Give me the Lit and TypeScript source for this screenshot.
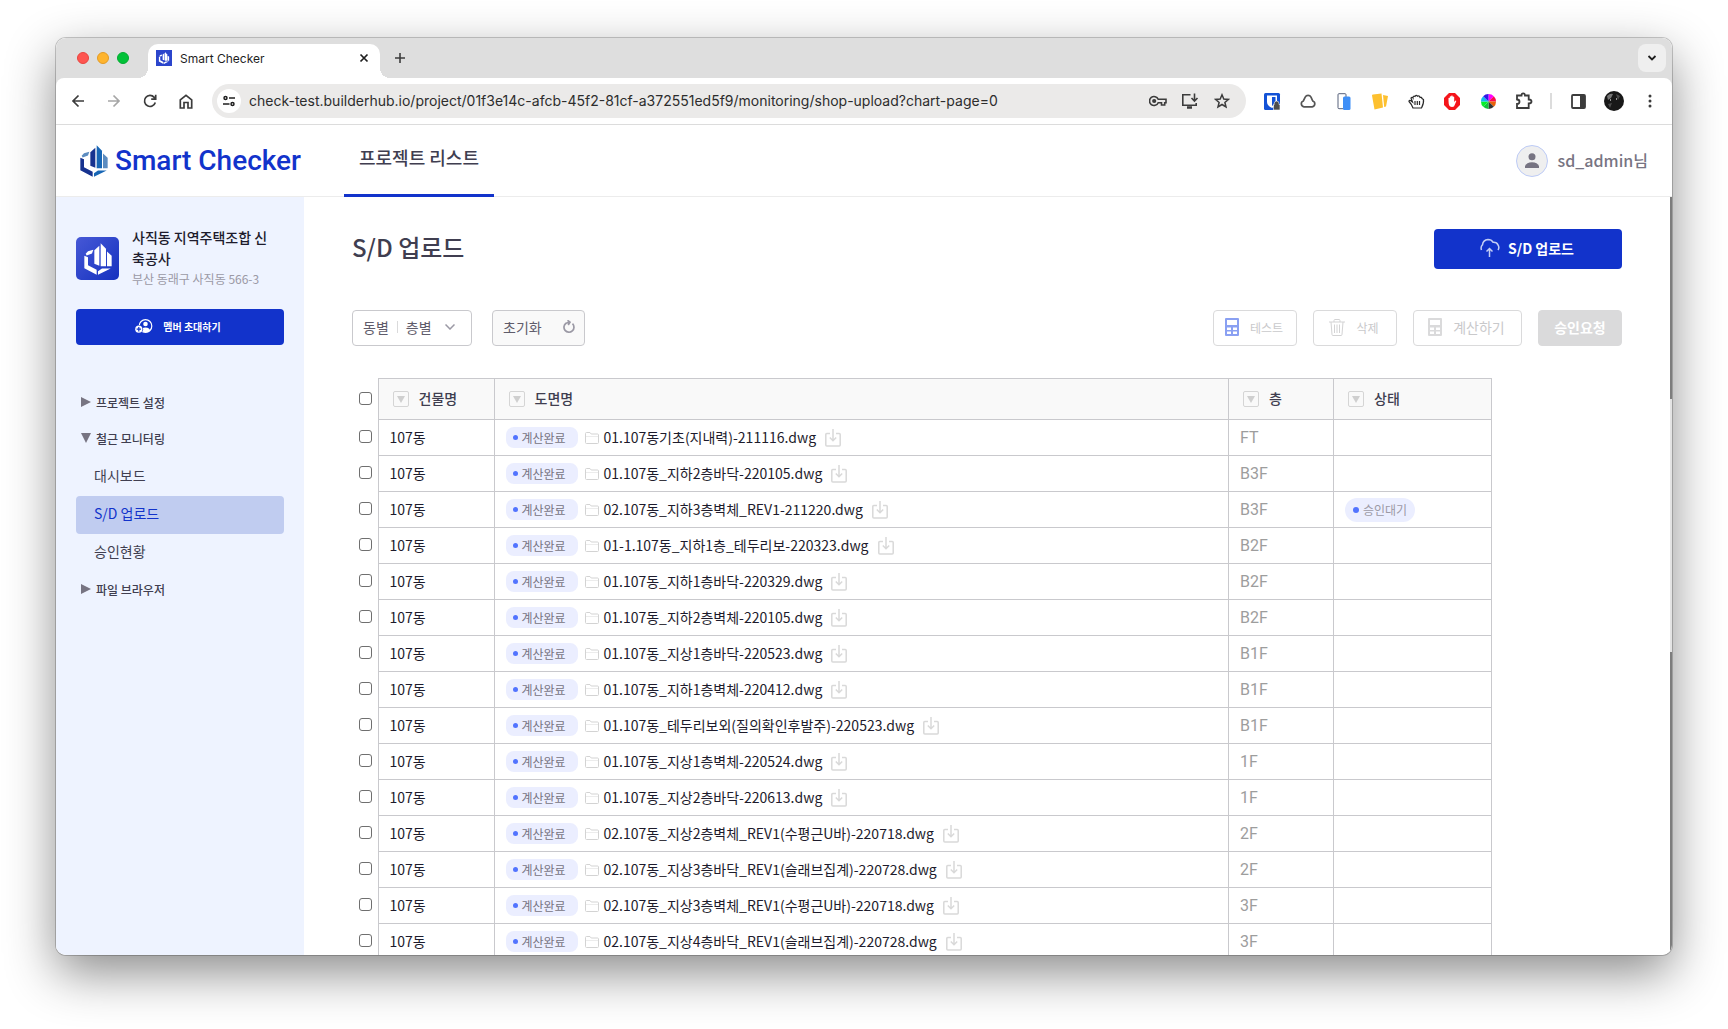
import { LitElement, html, css, svg, nothing } from "lit";
import { customElement, property } from "lit/decorators.js";

interface Drawing {
  name: string;
  floor: string;
  status?: string;
}

const BUILDING = "107동";
const DRAWINGS: Drawing[] = [
  { name: "01.107동기초(지내력)-211116.dwg", floor: "FT" },
  { name: "01.107동_지하2층바닥-220105.dwg", floor: "B3F" },
  { name: "02.107동_지하3층벽체_REV1-211220.dwg", floor: "B3F", status: "승인대기" },
  { name: "01-1.107동_지하1층_테두리보-220323.dwg", floor: "B2F" },
  { name: "01.107동_지하1층바닥-220329.dwg", floor: "B2F" },
  { name: "01.107동_지하2층벽체-220105.dwg", floor: "B2F" },
  { name: "01.107동_지상1층바닥-220523.dwg", floor: "B1F" },
  { name: "01.107동_지하1층벽체-220412.dwg", floor: "B1F" },
  { name: "01.107동_테두리보외(질의확인후발주)-220523.dwg", floor: "B1F" },
  { name: "01.107동_지상1층벽체-220524.dwg", floor: "1F" },
  { name: "01.107동_지상2층바닥-220613.dwg", floor: "1F" },
  { name: "02.107동_지상2층벽체_REV1(수평근U바)-220718.dwg", floor: "2F" },
  { name: "02.107동_지상3층바닥_REV1(슬래브집계)-220728.dwg", floor: "2F" },
  { name: "02.107동_지상3층벽체_REV1(수평근U바)-220718.dwg", floor: "3F" },
  { name: "02.107동_지상4층바닥_REV1(슬래브집계)-220728.dwg", floor: "3F" },
];

/* Shared reset for every element of the page. */
const base = css`
  *,
  *::before,
  *::after {
    box-sizing: border-box;
  }
  button {
    font: inherit;
    color: inherit;
    border: 0;
    padding: 0;
    margin: 0;
    background: none;
    display: flex;
    align-items: center;
    justify-content: center;
    white-space: nowrap;
  }
  a {
    color: inherit;
    text-decoration: none;
  }
  svg {
    display: block;
    flex: none;
  }
`;

/* The building mark: three towers inside an open hexagon. */
const towers = (dark: string, mid: string, light: string) => svg`
  <path fill=${light} d="M5 32L12 24L28 20L24 31L8 37Z"/>
  <path fill=${dark} d="M1 38L12 42V66L38 80V95L1 75Z"/>
  <path fill=${dark} d="M31 21L46 8V68L31 62Z"/>
  <path fill=${mid} d="M50 0L66 17V69H50Z"/>
  <path fill=${light} d="M69 25L83 38V69H69Z"/>
  <path fill=${mid} d="M42 84L54 76H80L42 95Z"/>`;

const calculator = svg`<path fill="currentColor" fill-rule="evenodd" d="M1 0H13Q14 0 14 1V17Q14 18 13 18H1Q0 18 0 17V1Q0 0 1 0ZM2 2V7H12V2ZM2 9.500V12H6V9.500ZM8 9.500V12H12V9.500ZM2 13.500V16H6V13.500ZM8 13.500V16H12V13.500Z"/>`;

@customElement("browser-bar")
export class BrowserBar extends LitElement {
  static styles = [
    base,
    css`
      :host {
        display: block;
        flex: none;
        background: #dedede;
        font-family: Inter, Roboto, sans-serif;
        color: #1f1f1f;
      }
      .strip {
        height: 40px;
        display: flex;
        align-items: center;
        padding: 6px 6px 0 21px;
      }
      .lights {
        display: flex;
        gap: 8px;
        margin-right: 19px;
        padding-bottom: 6px;
      }
      .light {
        width: 12px;
        height: 12px;
        border-radius: 50%;
        background: #fe5550;
        border: 1px solid #e8443f;
      }
      .light.min {
        background: #feb42e;
        border-color: #e39b25;
      }
      .light.max {
        background: #02c238;
        border-color: #03ab32;
      }
      .tab {
        width: 232px;
        height: 34px;
        border-radius: 10px 10px 0 0;
        background: #fff;
        display: flex;
        align-items: center;
        gap: 8px;
        padding: 0 10px 6px 8px;
        font-size: 12px;
        position: relative;
      }
      .tab::before,
      .tab::after {
        content: "";
        position: absolute;
        bottom: 0;
        width: 10px;
        height: 10px;
      }
      .tab::before {
        right: 100%;
        background: radial-gradient(circle at 0 0, #dedede 10px, #fff 10px);
      }
      .tab::after {
        left: 100%;
        background: radial-gradient(circle at 100% 0, #dedede 10px, #fff 10px);
      }
      .tab-title {
        flex: 1;
      }
      .new-tab {
        width: 28px;
        height: 28px;
        margin: 0 auto 6px 6px;
      }
      .tab-search {
        width: 28px;
        height: 28px;
        border-radius: 8px;
        background: #efefef;
        margin-bottom: 6px;
      }
      .toolbar {
        height: 47px;
        background: #fff;
        border-bottom: 1px solid #dcdcdc;
        border-radius: 8px 8px 0 0;
        display: flex;
        align-items: center;
        padding: 0 4px;
      }
      .slot {
        width: 36px;
        height: 34px;
        flex: none;
      }
      .address {
        flex: 1;
        min-width: 0;
        height: 34px;
        margin: 0 8px;
        border-radius: 17px;
        background: #ebeae9;
        display: flex;
        align-items: center;
        padding: 0 8px 0 5px;
      }
      .site {
        width: 24px;
        height: 24px;
        border-radius: 50%;
        background: #fff;
        margin-right: 8px;
        flex: none;
      }
      .url {
        flex: 1;
        min-width: 0;
        border: 0;
        padding: 0;
        background: none;
        font: 14px/20px Inter, Roboto, sans-serif;
        color: #2d2d2d;
        outline: none;
      }
      .address button.act {
        width: 32px;
        height: 32px;
        flex: none;
      }
      .divider {
        width: 2px;
        height: 16px;
        margin: 0 8px;
        background: #dcdcdc;
      }
    `,
  ];

  private slotButton(label: string, icon: unknown) {
    return html`<button class="slot" aria-label=${label}>${icon}</button>`;
  }

  render() {
    return html`
      <div class="strip">
        <div class="lights">
          <span class="light"></span><span class="light min"></span><span class="light max"></span>
        </div>
        <div class="tab">
          <svg width="16" height="16" viewBox="-22 -16 128 128"><path fill="#2b45cc" d="M-22-16H106V112H-22Z"/>${towers("#fff", "#fff", "#fff")}</svg>
          <span class="tab-title">Smart Checker</span>
          <button aria-label="탭 닫기">
            <svg width="12" height="12" viewBox="0 0 12 12" stroke="#1f1f1f" stroke-width="1.700"><path d="M2.500 2.500L9.500 9.500M9.500 2.500L2.500 9.500"/></svg>
          </button>
        </div>
        <button class="new-tab" aria-label="새 탭">
          <svg width="12" height="12" viewBox="0 0 12 12" stroke="#3c3c3c" stroke-width="1.600"><path d="M6 1V11M1 6H11"/></svg>
        </button>
        <button class="tab-search" aria-label="탭 검색">
          <svg width="10" height="10" viewBox="0 0 10 10" fill="none" stroke="#1f1f1f" stroke-width="1.800"><path d="M1.500 3L5 6.500L8.500 3"/></svg>
        </button>
      </div>
      <div class="toolbar">
        ${this.slotButton("뒤로", html`<svg width="14" height="14" viewBox="0 0 14 14" fill="none" stroke="#3c3c3c" stroke-width="1.700"><path d="M13 7H2M7.500 1.500L2 7L7.500 12.500"/></svg>`)}
        ${this.slotButton("앞으로", html`<svg width="14" height="14" viewBox="0 0 14 14" fill="none" stroke="#a6a6a6" stroke-width="1.700"><path d="M1 7H12M6.500 1.500L12 7L6.500 12.500"/></svg>`)}
        ${this.slotButton("새로고침", html`<svg width="14" height="14" viewBox="0 0 14 14" fill="none" stroke="#3c3c3c" stroke-width="1.700"><path d="M12.300 8.500A5.500 5.500 0 1 1 11.200 3.400L12.500 5M12.700 .800V5.200H8.200"/></svg>`)}
        ${this.slotButton("홈", html`<svg width="14" height="15" viewBox="0 0 14 15" fill="none" stroke="#3c3c3c" stroke-width="1.700"><path d="M1.300 14V5.800L7 1.300L12.700 5.800V14H9V8.500H5V14Z"/></svg>`)}
        <div class="address">
          <button class="site" aria-label="사이트 정보">
            <svg width="12" height="12" viewBox="0 0 12 12" fill="none" stroke="#1f1f1f" stroke-width="1.500"><circle cx="2.500" cy="3" r="1.500"/><circle cx="9.500" cy="9" r="1.500"/><path d="M6 3H12M0 9H6.500"/></svg>
          </button>
          <input class="url" type="text" aria-label="주소" value="check-test.builderhub.io/project/01f3e14c-afcb-45f2-81cf-a372551ed5f9/monitoring/shop-upload?chart-page=0" />
          <button class="act" aria-label="비밀번호">
            <svg width="18" height="12" viewBox="0 0 18 12" fill="none" stroke="#3c3c3c" stroke-width="1.600"><path d="M9.200 4.300H17V7.700H15.700V10H12.500V7.700H9.200A4.500 4.500 0 1 1 9.200 4.300Z"/><circle cx="5.200" cy="6" r="1.300" fill="#3c3c3c"/></svg>
          </button>
          <button class="act" aria-label="앱 설치">
            <svg width="18" height="16" viewBox="0 0 18 16" fill="none" stroke="#3c3c3c" stroke-width="1.600"><path d="M9.500 1.800H1.800V12.200H15.200V10M13.500 .500V7.500M10.500 5L13.500 8L16.500 5"/><path d="M6 14.500H11" stroke-width="2.500"/></svg>
          </button>
          <button class="act" aria-label="북마크">
            <svg width="16" height="16" viewBox="0 0 16 16" fill="none" stroke="#3c3c3c" stroke-width="1.500"><path d="M8 1.800L9.800 6L14.400 6.400L10.900 9.400L12 14L8 11.500L4 14L5.100 9.400L1.600 6.400L6.200 6Z"/></svg>
          </button>
        </div>
        ${this.slotButton("비밀번호 관리자", html`<svg width="17" height="17" viewBox="0 0 17 17"><rect width="16" height="17" rx="1.500" fill="#1352d6"/><path fill="#fff" d="M3 2.500H13V9Q13 12.500 8 15Q3 12.500 3 9Z"/><path fill="#1352d6" d="M8 4H11.500V9Q11.300 11 8 13Z"/><path fill="#4d4d4d" stroke="#fff" stroke-width=".600" d="M9.500 11.500H10.200V10.500A2.400 2.400 0 0 1 15 10.500V11.500H16V17H9.500Z"/></svg>`)}
        ${this.slotButton("클라우드", html`<svg width="16" height="14" viewBox="0 0 16 14" fill="none" stroke="#555" stroke-width="1.700"><path d="M4 12.800A3 3 0 0 1 3.300 7L5.200 3.200A3.300 3.300 0 0 1 11 3.200L12.800 7A3 3 0 0 1 12.200 12.800Z"/></svg>`)}
        ${this.slotButton("기기 화면", html`<svg width="14" height="17" viewBox="0 0 14 17"><rect x="1" y=".700" width="8" height="15" rx="1" fill="#fff" stroke="#57617a"/><rect x="6" y="3.500" width="7.500" height="13.500" rx="1.500" fill="#3f8ff7"/></svg>`)}
        ${this.slotButton("메모", html`<svg width="16" height="17" viewBox="0 0 16 17" fill="#fdc02f"><path d="M0 2.500Q0 1.500 1 1.400L9.500 .500L11 14.500L2.500 16.500Z"/><path d="M11 2L16 3L14 13.500L12.200 14Z"/></svg>`)}
        ${this.slotButton("손 도구", html`<svg width="17" height="15" viewBox="0 0 17 15" fill="#fff" stroke="#2a2a2a" stroke-width="1.200"><path d="M5 14Q3.500 10 1 7.500Q1 6 2.500 6.500L4.500 8L3 4Q4 2.500 5 4Q5 1.500 7 2.500Q8 .500 9.500 2.200Q11.500 1 12 3.500Q13.500 2.800 14 4.500L15.500 5.500Q16 9 13.500 14ZM7 7V11M9.300 7V11M11.500 7V11"/></svg>`)}
        ${this.slotButton("광고 차단", html`<svg width="16" height="17" viewBox="0 0 16 17"><path fill="#f5151b" d="M5 0H11L16 5V12L11 17H5L0 12V5Z"/><path fill="#fff" d="M4.500 8V5Q5.200 4.500 5.800 5V3.500Q6.500 3 7.200 3.500V2.800Q8 2.300 8.700 2.800V3.800Q9.500 3.300 10.200 4V9L11.500 7.500Q12.500 7.500 12.200 8.500L10 13.500Q7.500 14.500 5.500 13Q4.500 11.500 4.500 8Z"/></svg>`)}
        ${this.slotButton("색상 선택", html`<svg width="15" height="15" viewBox="-8 -8 16 16"><path fill="#f0f" d="M0 0V-8A8 8 0 0 1 5.700-5.700Z"/><path fill="#fb0a50" d="M0 0L5.700-5.700A8 8 0 0 1 8 0Z"/><path fill="#e8610a" d="M0 0H8A8 8 0 0 1 5.700 5.700Z"/><path fill="#333" d="M0 0L5.700 5.700A8 8 0 0 1 0 8Z"/><path fill="#0fc23a" d="M0 0V8A8 8 0 0 1-5.700 5.700Z"/><path fill="#05f02a" d="M0 0L-5.700 5.700A8 8 0 0 1-8 0Z"/><path fill="#11b6ee" d="M0 0H-8A8 8 0 0 1-5.700-5.700Z"/><path fill="#3216e8" d="M0 0L-5.700-5.700A8 8 0 0 1 0-8Z"/></svg>`)}
        ${this.slotButton("확장 프로그램", html`<svg width="18" height="18" viewBox="0 0 18 18" fill="none" stroke="#3c3c3c" stroke-width="1.800"><path d="M2 3.500H6.500Q6.500 1.300 8.200 1.300T10 3.500H13.700V7.500Q16.500 7.500 16.500 9.500T13.700 11.500V16H2V12Q4.500 12 4.500 9.800T2 7.500Z"/></svg>`)}
        <span class="divider"></span>
        ${this.slotButton("사이드 패널", html`<svg width="15" height="15" viewBox="0 0 15 15"><rect x="1" y="1" width="13" height="13" rx="1" fill="none" stroke="#3c3c3c" stroke-width="1.800"/><path fill="#3c3c3c" d="M9 1H14V14H9Z"/></svg>`)}
        ${this.slotButton("프로필", html`<svg width="20" height="20" viewBox="0 0 20 20"><circle cx="10" cy="10" r="10" fill="#181818"/><path fill="#777" d="M3 5Q6 2 9 3L7 7L4 9Z"/><path fill="#4a4a4a" d="M12 3L16 5L14 9ZM4 13L8 12L6 17Z"/><path fill="#9a9a9a" d="M6 8H7V10H6ZM12 7H13V9H12Z"/></svg>`)}
        ${this.slotButton("메뉴", html`<svg width="4" height="14" viewBox="0 0 4 14" fill="#3c3c3c"><circle cx="2" cy="2" r="1.500"/><circle cx="2" cy="7" r="1.500"/><circle cx="2" cy="12" r="1.500"/></svg>`)}
      </div>
    `;
  }
}

@customElement("side-menu")
export class SideMenu extends LitElement {
  static styles = [
    base,
    css`
      :host {
        display: block;
        width: 248px;
        flex: none;
        background: #eef3ff;
        padding: 30px 20px 0;
        color: #403e50;
      }
      .project {
        display: flex;
        align-items: center;
        gap: 13px;
        padding-right: 12px;
        margin-bottom: 20px;
      }
      .name {
        margin: 0;
        font-size: 14px;
        line-height: 21px;
        font-weight: 500;
        color: #1d1b2c;
        word-break: break-all;
      }
      .place {
        margin: 0;
        font-size: 12px;
        line-height: 20px;
        color: #9b99a5;
        white-space: nowrap;
      }
      .invite {
        width: 100%;
        height: 36px;
        padding: 0 4px 2px 0;
        border-radius: 4px;
        background: #1233cb;
        color: #fff;
        font-size: 10px;
        font-weight: 700;
        gap: 10px;
        margin-bottom: 40px;
      }
      .group {
        width: 100%;
        height: 36px;
        padding: 0 0 2px 5px;
        gap: 5px;
        justify-content: flex-start;
        font-size: 12px;
        font-weight: 500;
      }
      ul {
        list-style: none;
        margin: 0;
        padding: 1px 0 0;
      }
      .item {
        display: flex;
        align-items: center;
        height: 38px;
        padding: 0 18px 4px;
        border-radius: 4px;
        font-size: 14px;
      }
      .item.current {
        background: #c0ccf0;
        color: #1233cb;
      }
    `,
  ];

  private group(label: string, open = false) {
    return html`<button class="group" aria-expanded=${open ? "true" : "false"}>
      <svg width="10" height="10" viewBox="0 0 10 10" fill="#777482"><path d=${open ? "M0 0H10L5 10Z" : "M0 0L10 5L0 10Z"} /></svg>
      ${label}
    </button>`;
  }

  render() {
    return html`
      <div class="project">
        <svg width="43" height="43" viewBox="0 0 43 43">
          <defs><linearGradient id="g" x1="0" y1="0" x2="1" y2="1"><stop offset="0" stop-color="#4658d6"/><stop offset="1" stop-color="#1531bf"/></linearGradient></defs>
          <rect width="43" height="43" rx="5" fill="url(#g)"/>
          <svg x="8" y="6" width="28" height="32" viewBox="0 0 84 95">${towers("#fff", "#fff", "#fff")}</svg>
        </svg>
        <div>
          <p class="name">사직동 지역주택조합 신축공사</p>
          <p class="place">부산 동래구 사직동 566-3</p>
        </div>
      </div>
      <button class="invite">
        <svg width="18" height="14" viewBox="0 0 18 14"><circle cx="10.500" cy="7" r="6.300" fill="none" stroke="#fff" stroke-width="1.200"/><circle cx="10.500" cy="5" r="2.300" fill="#fff"/><path fill="#fff" d="M6 12Q6 8.500 10.500 8.500T15 12Q12 14.500 6 12Z"/><circle cx="3.800" cy="10.200" r="4.300" fill="#1233cb"/><circle cx="3.800" cy="10.200" r="3.600" fill="#fff"/><path stroke="#1233cb" stroke-width="1.200" d="M3.800 8V12.400M1.600 10.200H6"/></svg>
        멤버 초대하기
      </button>
      <nav aria-label="프로젝트 메뉴">
        ${this.group("프로젝트 설정")} ${this.group("철근 모니터링", true)}
        <ul>
          <li><a class="item" href="#dashboard">대시보드</a></li>
          <li><a class="item current" href="#shop-upload" aria-current="page">S/D 업로드</a></li>
          <li><a class="item" href="#approval">승인현황</a></li>
        </ul>
        ${this.group("파일 브라우저")}
      </nav>
    `;
  }
}

@customElement("drawing-table")
export class DrawingTable extends LitElement {
  @property({ attribute: false }) rows: Drawing[] = [];

  static styles = [
    base,
    css`
      :host {
        display: block;
        padding-right: 130px;
      }
      table {
        width: 100%;
        table-layout: fixed;
        border-collapse: collapse;
      }
      .c-check {
        width: 26px;
      }
      .c-building {
        width: 116px;
      }
      .c-floor {
        width: 105px;
      }
      .c-status {
        width: 158px;
      }
      th,
      td {
        height: 36px;
        padding: 0 11px;
        border: 1px solid #c9c9cd;
        text-align: left;
        font-size: 14px;
        line-height: 20px;
        font-weight: 400;
        color: #1d1b2c;
        white-space: nowrap;
      }
      thead th {
        height: 41px;
        padding: 0 14px;
        background: #f9f9f9;
        font-weight: 500;
        color: #403e50;
      }
      th.pick,
      td.pick {
        border: 0;
        border-right: 1px solid #c9c9cd;
        background: none;
        padding: 0 0 2px 7px;
      }
      .check {
        display: block;
        appearance: none;
        width: 13px;
        height: 13px;
        margin: 0;
        border: 1px solid #6f6f6f;
        border-radius: 3px;
        background: #fff;
      }
      .head,
      .file {
        display: flex;
        align-items: center;
      }
      .head {
        gap: 10px;
      }
      td.building {
        padding-bottom: 2px;
      }
      .label,
      .name {
        padding-bottom: 2px;
      }
      .sort {
        width: 16px;
        height: 16px;
        border: 1px solid #d5d5d5;
        border-radius: 2px;
      }
      .badge {
        display: flex;
        align-items: center;
        gap: 4px;
        width: 72px;
        height: 21px;
        padding-left: 7px;
        margin-right: 7px;
        border-radius: 8px;
        background: #ebeeff;
        color: #777482;
        font-size: 12px;
        line-height: 20px;
      }
      .badge::before,
      .state::before {
        content: "";
        width: 5px;
        height: 5px;
        border-radius: 50%;
        background: #5274ff;
      }
      .name {
        margin: 0 9px 0 5px;
      }
      td.floor {
        font-family: Roboto, sans-serif;
        font-size: 16px;
        color: #9d9d9d;
      }
      .state {
        display: inline-flex;
        align-items: center;
        gap: 4px;
        height: 24px;
        padding: 0 8px;
        border-radius: 12px;
        background: #ebeeff;
        color: #9b99a5;
        font-size: 12px;
        vertical-align: middle;
      }
      .state::before {
        width: 6px;
        height: 6px;
      }
    `,
  ];

  private head(label: string) {
    return html`<th scope="col">
      <div class="head">
        <button class="sort" aria-label="${label} 정렬">
          <svg width="8" height="7" viewBox="0 0 8 7" fill="#cfcfcf"><path d="M0 0H8L4 7Z"/></svg>
        </button>
        <span class="label">${label}</span>
      </div>
    </th>`;
  }

  render() {
    return html`
      <table>
        <colgroup>
          <col class="c-check" /><col class="c-building" /><col /><col class="c-floor" /><col class="c-status" />
        </colgroup>
        <thead>
          <tr>
            <th class="pick"><input class="check" type="checkbox" aria-label="전체 선택" /></th>
            ${this.head("건물명")} ${this.head("도면명")} ${this.head("층")} ${this.head("상태")}
          </tr>
        </thead>
        <tbody>
          ${this.rows.map(
            (row) => html`<tr>
              <td class="pick"><input class="check" type="checkbox" aria-label=${row.name} /></td>
              <td class="building">${BUILDING}</td>
              <td>
                <div class="file">
                  <span class="badge">계산완료</span>
                  <svg width="14" height="12" viewBox="0 0 14 12" fill="none" stroke="#d3d3d3"><path d="M.500 10.500V1.500Q.500 .500 1.500 .500H5L6.200 2H12.500Q13.500 2 13.500 3V10.500Q13.500 11.500 12.500 11.500H1.500Q.500 11.500 .500 10.500Z"/><path stroke="#ececec" d="M1 4.500H13"/></svg>
                  <span class="name">${row.name}</span>
                  <button aria-label="다운로드">
                    <svg width="16" height="18" viewBox="0 0 16 18" fill="none" stroke="#d9d9d9" stroke-width="1.500"><path d="M5 4.500H1.800Q.800 4.500 .800 5.500V16Q.800 17 1.800 17H14.200Q15.200 17 15.200 16V5.500Q15.200 4.500 14.200 4.500H11M8 0V11.500M4.800 8.500L8 11.700L11.200 8.500"/></svg>
                  </button>
                </div>
              </td>
              <td class="floor">${row.floor}</td>
              <td>${row.status ? html`<span class="state">${row.status}</span>` : nothing}</td>
            </tr>`,
          )}
        </tbody>
      </table>
    `;
  }
}

@customElement("app-root")
export class AppRoot extends LitElement {
  static styles = [
    base,
    css`
      :host {
        display: block;
        box-sizing: border-box;
        height: 100vh;
        padding: 38px 56px 74px;
        overflow: hidden;
        background: #fff;
        font-family: "Noto Sans CJK KR", sans-serif;
        color: #403e50;
      }
      .window {
        height: 100%;
        display: flex;
        flex-direction: column;
        overflow: hidden;
        border-radius: 10px;
        background: #fff;
      }
      .frame {
        height: 100%;
        border-radius: 10px;
        box-shadow: 0 0 0 1px rgba(0, 0, 0, 0.2), 0 18px 50px rgba(0, 0, 0, 0.46);
      }
      .header {
        height: 72px;
        flex: none;
        display: flex;
        align-items: center;
        padding: 0 24px;
        border-bottom: 1px solid #ececec;
      }
      .brand {
        display: flex;
        align-items: center;
        gap: 7px;
        width: 264px;
        font: 500 28px/32px Roboto, sans-serif;
        color: #1233cb;
        white-space: nowrap;
      }
      .nav-link {
        align-self: stretch;
        width: 150px;
        display: flex;
        align-items: center;
        justify-content: center;
        padding-bottom: 6px;
        border-bottom: 3px solid #1233cb;
        margin-bottom: -1px;
        font-size: 18px;
        font-weight: 500;
      }
      .user {
        margin-left: auto;
        display: flex;
        align-items: center;
        gap: 10px;
        font-size: 16px;
        font-weight: 500;
        color: #777482;
      }
      .user-name {
        padding-bottom: 2px;
      }
      .avatar {
        width: 32px;
        height: 32px;
        border: 1px solid #bccaf5;
        border-radius: 50%;
        background: #efefef;
        display: flex;
        align-items: center;
        justify-content: center;
      }
      .body {
        flex: 1;
        min-height: 0;
        display: flex;
      }
      main {
        flex: 1;
        min-width: 0;
        overflow: hidden;
        padding: 32px 48px 0;
      }
      .scroll {
        width: 2px;
        flex: none;
        display: flex;
        flex-direction: column;
        background: #e4e4e4;
      }
      .thumb {
        background: #7d7d7d;
        flex: 4;
      }
      .track {
        flex: 5;
      }
      .thumb.second {
        flex: 6;
      }
      .title-row,
      .tools {
        display: flex;
        align-items: center;
      }
      .title-row {
        align-items: flex-start;
        justify-content: space-between;
        margin-bottom: 41px;
      }
      h1 {
        margin: 0;
        font-size: 24px;
        line-height: 36px;
        font-weight: 500;
      }
      .upload {
        width: 188px;
        height: 40px;
        gap: 8px;
        padding: 0 2px 2px 0;
        border-radius: 4px;
        background: #1233cb;
        color: #fff;
        font-size: 14px;
        font-weight: 700;
      }
      .tools {
        gap: 16px;
        margin-bottom: 32px;
      }
      .tool {
        height: 36px;
        padding: 0 11px 2px;
        border: 1px solid #dadadb;
        border-radius: 4px;
        gap: 11px;
        font-size: 14px;
        color: #c9c9cb;
      }
      .tool.small {
        width: 84px;
        padding-right: 13px;
        font-size: 12px;
      }
      .tool.calc {
        width: 109px;
        padding-right: 13px;
      }
      .tool.request {
        width: 84px;
        background: #dadadb;
        color: #fff;
        font-weight: 700;
      }
      .tool.filter,
      .tool.reset {
        border-color: #c9c9cd;
        color: #5f5c6b;
      }
      .tool.filter {
        gap: 8px;
        width: 120px;
        padding: 0 10px 2px;
        justify-content: flex-start;
      }
      .filter svg {
        margin-left: 5px;
      }
      .tool.reset {
        width: 93px;
        justify-content: space-between;
        padding: 0 9px 2px 10px;
        background: #f9f9f9;
        margin: 0 auto 0 4px;
      }
      .bar {
        width: 1px;
        height: 12px;
        background: #dadadb;
      }
    `,
  ];

  render() {
    return html`
      <div class="frame">
        <div class="window">
          <browser-bar></browser-bar>
          <header class="header">
            <a class="brand" href="#home">
              <svg width="28" height="32" viewBox="0 0 84 95">${towers("#16328f", "#1766b5", "#5c8cc0")}</svg>
              Smart Checker
            </a>
            <a class="nav-link" href="#projects">프로젝트 리스트</a>
            <div class="user">
              <span class="avatar"><svg width="14" height="15" viewBox="0 0 14 15" fill="#777482"><circle cx="7" cy="3.700" r="3.500"/><path d="M0 15V13Q1.500 9.200 7 9.200T14 13V15Z"/></svg></span>
              <span class="user-name">sd_admin님</span>
            </div>
          </header>
          <div class="body">
            <side-menu></side-menu>
            <main>
              <div class="title-row">
                <h1>S/D 업로드</h1>
                <button class="upload">
                  <svg width="20" height="20" viewBox="0 0 20 20" fill="none" stroke="#c3cdf4" stroke-width="1.500"><path d="M1.500 12Q.300 9 2.500 6.800Q3 2 8 1.500Q11.500 1.500 13 4.200Q17 4 18 7Q19.700 9.500 18 12M9.500 19V11M6.500 13.500L9.500 10.500L12.500 13.500"/></svg>
                  S/D 업로드
                </button>
              </div>
              <div class="tools">
                <button class="tool filter" aria-haspopup="listbox">
                  동별<span class="bar"></span>층별
                  <svg width="10" height="6" viewBox="0 0 10 6" fill="none" stroke="#9b99a5" stroke-width="1.500"><path d="M.500 .500L5 5L9.500 .500"/></svg>
                </button>
                <button class="tool reset">
                  초기화
                  <svg width="12" height="14" viewBox="0 0 12 14" fill="none" stroke="#9b99a5" stroke-width="1.700"><path d="M9.500 3.700A5 5 0 1 1 3 3.200L6.500 2.200M4.500 .300L7 2.200L5.200 5"/></svg>
                </button>
                <button class="tool small">
                  <svg width="14" height="18" viewBox="0 0 14 18" color="#8aa0f2">${calculator}</svg>
                  테스트
                </button>
                <button class="tool small">
                  <svg width="16" height="17" viewBox="0 0 16 17" fill="none" stroke="#d3d3d4"><path d="M0 3H16M5 3V1.500Q5 .500 6 .500H10Q11 .500 11 1.500V3M2 3L3 15.500Q3 16.500 4 16.500H12Q13 16.500 13 15.500L14 3M5.500 5.500V14M8 5.500V14M10.500 5.500V14"/></svg>
                  삭제
                </button>
                <button class="tool calc">
                  <svg width="14" height="18" viewBox="0 0 14 18" color="#dadadb">${calculator}</svg>
                  계산하기
                </button>
                <button class="tool request">승인요청</button>
              </div>
              <drawing-table .rows=${DRAWINGS}></drawing-table>
            </main>
            <div class="scroll"><span class="thumb"></span><span class="track"></span><span class="thumb second"></span></div>
          </div>
        </div>
      </div>
    `;
  }
}
